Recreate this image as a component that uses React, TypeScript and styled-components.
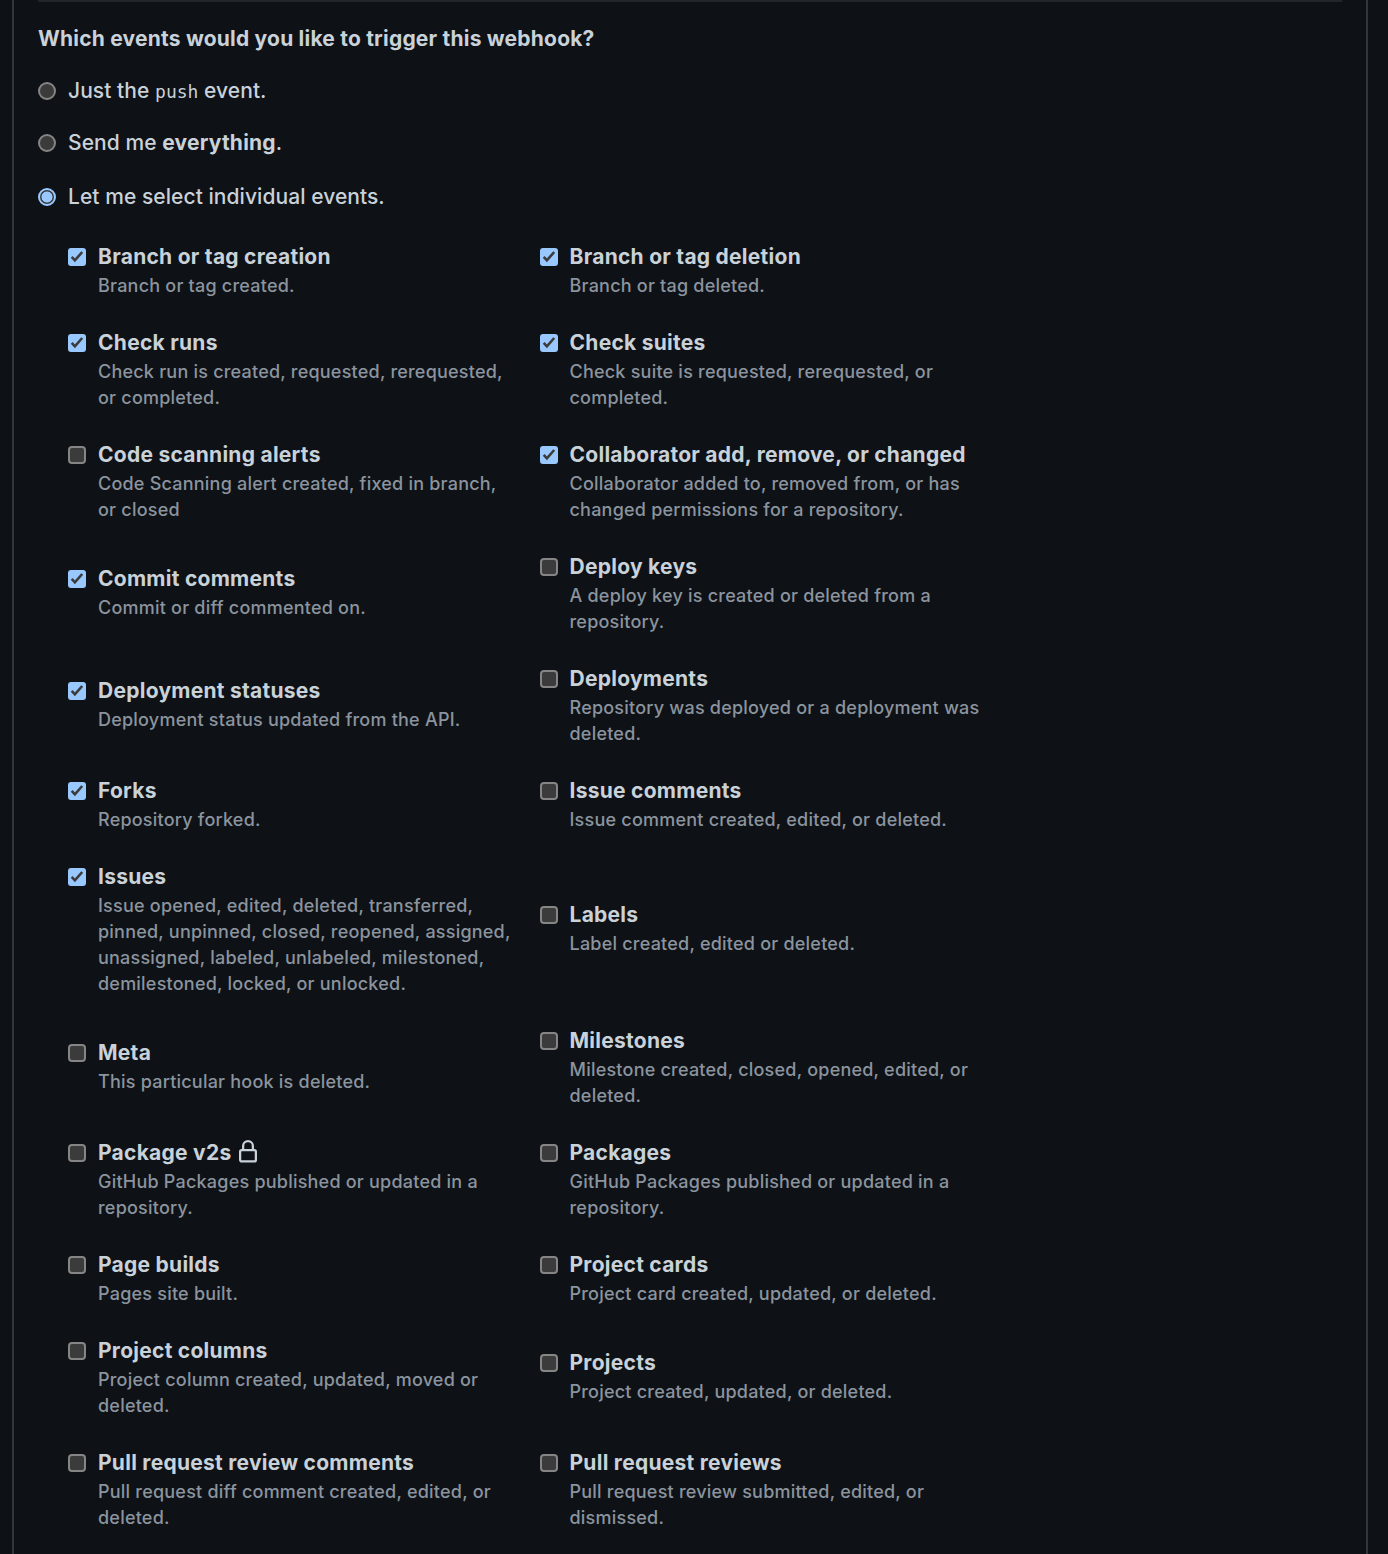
import React, { useState } from "react";
import styled, { createGlobalStyle, css } from "styled-components";

const GlobalStyle = createGlobalStyle`
  * { box-sizing: border-box; }
  html, body { margin: 0; background: #0e1116; }
  body {
    height: 1554px;
    overflow: hidden;
    color: #c9d1d9;
    font-family: Inter, "Liberation Sans", sans-serif;
    font-size: 21px;
    font-weight: 450;
    line-height: 30px;
  }
`;

const Panel = styled.main`
  width: 1356px;
  height: 1554px;
  margin-left: 12px;
  padding: 0 24px;
  border: solid #30363d;
  border-width: 0 2px;
  overflow: hidden;
`;

const Divider = styled.hr`
  height: 2px;
  margin: 0;
  border: 0;
  background: #21262d;
`;

const Heading = styled.h2`
  margin: 22px 0 0;
  font-size: 21px;
  line-height: 30px;
  font-weight: 650;
  letter-spacing: 0.21px;
`;

const Choices = styled.div`
  display: flex;
  flex-direction: column;
`;

const Choice = styled.label<{ $gap: number }>`
  display: flex;
  align-items: center;
  gap: 12px;
  height: 30px;
  margin-top: ${(p) => p.$gap}px;
  letter-spacing: 0.06px;
`;

const Strong = styled.b`
  font-weight: 650;
  letter-spacing: 0.2px;
`;

const Code = styled.code`
  font-family: "DejaVu Sans Mono", monospace;
  font-size: 18px;
  line-height: 1;
  letter-spacing: 0;
`;

const Radio = styled.input.attrs({ type: "radio" })`
  appearance: none;
  flex: none;
  width: 18px;
  height: 18px;
  margin: 0;
  border: 2px solid #858585;
  border-radius: 50%;
  background: #3b3b3b;

  &:checked {
    border-color: #99c8ff;
    background: radial-gradient(circle, #99c8ff 5.2px, #3b3b3b 5.8px);
  }
`;

const Events = styled.div`
  display: grid;
  grid-template-columns: 472px 472px;
  align-items: center;
  margin: 30px 0 0 30px;
`;

const Item = styled.div<{ $short?: boolean }>`
  display: grid;
  grid-template-columns: 18px 416px;
  column-gap: 12px;
  padding-bottom: 29px;
  ${(p) =>
    p.$short &&
    css`
      margin-bottom: 2px;
    `}

  &:nth-child(even) {
    column-gap: 11.5px;
  }
`;

const BoxWrap = styled.span`
  display: grid;
  place-items: center;
  width: 18px;
  height: 30px;

  > * {
    grid-area: 1 / 1;
  }
`;

const Box = styled.input.attrs({ type: "checkbox" })`
  appearance: none;
  width: 18px;
  height: 18px;
  margin: 0;
  border: 2px solid #858585;
  border-radius: 4px;
  background: #3b3b3b;

  &:checked {
    border: 0;
    border-radius: 3px;
    background: #99c8ff;
  }
`;

const Tick = styled.svg`
  width: 18px;
  height: 18px;
  pointer-events: none;
`;

const Name = styled.span`
  display: flex;
  align-items: center;
  height: 30px;
  font-weight: 650;
  letter-spacing: 0.26px;
  white-space: nowrap;
`;

const Lock = styled.svg`
  width: 24px;
  height: 24px;
  margin: -3px 0 0 5px;
  fill: #c9d1d9;
`;

const Note = styled.p`
  grid-column: 2;
  margin: 1px 0 0;
  color: #8b949e;
  font-size: 18px;
  line-height: 26px;
  letter-spacing: 0.22px;
`;

type EventInfo = { name: string; note: string; on?: boolean; short?: boolean; locked?: boolean };

const events: EventInfo[] = [
  { name: "Branch or tag creation", note: "Branch or tag created.", on: true },
  { name: "Branch or tag deletion", note: "Branch or tag deleted.", on: true },
  { name: "Check runs", note: "Check run is created, requested, rerequested, or completed.", on: true },
  { name: "Check suites", note: "Check suite is requested, rerequested, or completed.", on: true },
  { name: "Code scanning alerts", note: "Code Scanning alert created, fixed in branch, or closed" },
  { name: "Collaborator add, remove, or changed", note: "Collaborator added to, removed from, or has changed permissions for a repository.", on: true },
  { name: "Commit comments", note: "Commit or diff commented on.", on: true, short: true },
  { name: "Deploy keys", note: "A deploy key is created or deleted from a repository." },
  { name: "Deployment statuses", note: "Deployment status updated from the API.", on: true, short: true },
  { name: "Deployments", note: "Repository was deployed or a deployment was deleted." },
  { name: "Forks", note: "Repository forked.", on: true },
  { name: "Issue comments", note: "Issue comment created, edited, or deleted." },
  { name: "Issues", note: "Issue opened, edited, deleted, transferred, pinned, unpinned, closed, reopened, assigned, unassigned, labeled, unlabeled, milestoned, demilestoned, locked, or unlocked.", on: true },
  { name: "Labels", note: "Label created, edited or deleted.", short: true },
  { name: "Meta", note: "This particular hook is deleted.", short: true },
  { name: "Milestones", note: "Milestone created, closed, opened, edited, or deleted." },
  { name: "Package v2s", note: "GitHub Packages published or updated in a repository.", locked: true },
  { name: "Packages", note: "GitHub Packages published or updated in a repository." },
  { name: "Page builds", note: "Pages site built." },
  { name: "Project cards", note: "Project card created, updated, or deleted." },
  { name: "Project columns", note: "Project column created, updated, moved or deleted." },
  { name: "Projects", note: "Project created, updated, or deleted.", short: true },
  { name: "Pull request review comments", note: "Pull request diff comment created, edited, or deleted." },
  { name: "Pull request reviews", note: "Pull request review submitted, edited, or dismissed." },
];

function EventItem({ event }: { event: EventInfo }) {
  const [on, setOn] = useState(!!event.on);
  return (
    <Item $short={event.short}>
      <BoxWrap>
        <Box checked={on} onChange={() => setOn(!on)} aria-label={event.name} />
        {on && (
          <Tick viewBox="0 0 18 18">
            <path d="M3.7 8.8 6.9 12.3 14.2 4" fill="none" stroke="#3b3b3b" strokeWidth="2.6" />
          </Tick>
        )}
      </BoxWrap>
      <Name>
        {event.name}
        {event.locked && (
          <Lock viewBox="0 0 16 16">
            <path
              fillRule="evenodd"
              d="M4 4v2h-.25A1.75 1.75 0 002 7.75v5.5c0 .966.784 1.75 1.75 1.75h8.5A1.75 1.75 0 0014 13.25v-5.5A1.75 1.75 0 0012.25 6H12V4a4 4 0 10-8 0zm6.5 2V4a2.5 2.5 0 10-5 0v2h5zM12 7.5h.25a.25.25 0 01.25.25v5.5a.25.25 0 01-.25.25h-8.5a.25.25 0 01-.25-.25v-5.5a.25.25 0 01.25-.25H12z"
            />
          </Lock>
        )}
      </Name>
      <Note>{event.note}</Note>
    </Item>
  );
}

export default function App() {
  const [choice, setChoice] = useState(2);
  return (
    <>
      <GlobalStyle />
      <Panel>
        <Divider />
        <Heading>Which events would you like to trigger this webhook?</Heading>
        <Choices>
          <Choice $gap={22}>
            <Radio name="events" checked={choice === 0} onChange={() => setChoice(0)} />
            <span>
              Just the <Code>push</Code> event.
            </span>
          </Choice>
          <Choice $gap={22}>
            <Radio name="events" checked={choice === 1} onChange={() => setChoice(1)} />
            <span>
              Send me <Strong>everything</Strong>.
            </span>
          </Choice>
          <Choice $gap={24}>
            <Radio name="events" checked={choice === 2} onChange={() => setChoice(2)} />
            <span>Let me select individual events.</span>
          </Choice>
        </Choices>
        <Events>
          {events.map((event) => (
            <EventItem key={event.name} event={event} />
          ))}
        </Events>
      </Panel>
    </>
  );
}
